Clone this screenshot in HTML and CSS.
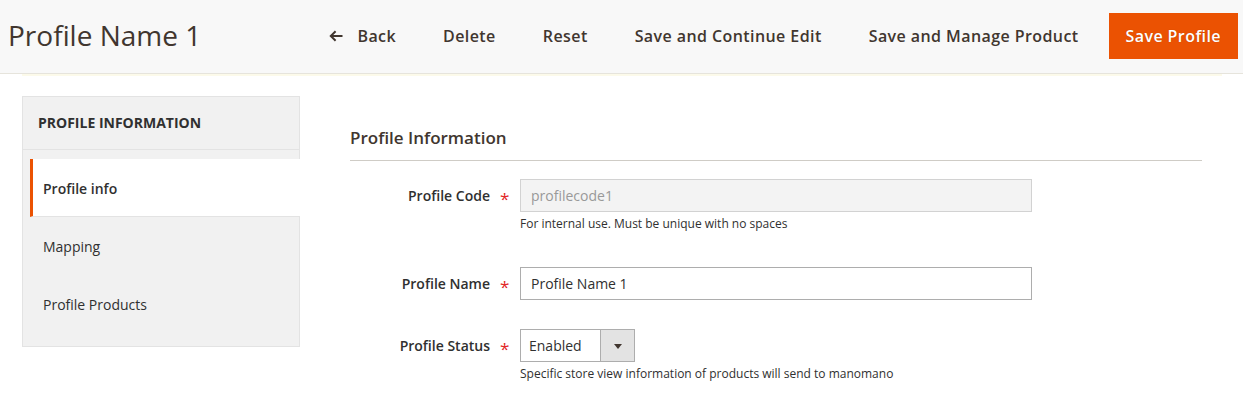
FILE: index.html
```html
<!DOCTYPE html>
<html lang="en">
<head>
<meta charset="utf-8">
<title>Profile Name 1</title>
<link rel="stylesheet" href="styles.css">
</head>
<body>
<header class="page-header">
  <h1 class="page-title">Profile Name 1</h1>
  <div class="page-actions">
    <button class="action back" type="button">
      <svg class="back-icon" width="14" height="12" viewBox="0 0 14 12" aria-hidden="true">
        <path d="M13.5 6H2.2M6.6 1.3L1.8 6l4.8 4.7" fill="none" stroke="#41362f" stroke-width="2"/>
      </svg>
      <span>Back</span>
    </button>
    <button class="action" type="button">Delete</button>
    <button class="action" type="button">Reset</button>
    <button class="action" type="button">Save and Continue Edit</button>
    <button class="action" type="button">Save and Manage Product</button>
    <button class="action primary" type="button">Save Profile</button>
  </div>
</header>
<div class="messages-band"></div>

<div class="page-columns">
  <aside class="sidebar">
    <div class="nav-title">Profile Information</div>
    <ul class="nav-items">
      <li class="nav-item active">Profile info</li>
      <li class="nav-item">Mapping</li>
      <li class="nav-item">Profile Products</li>
    </ul>
  </aside>

  <main class="main">
    <div class="legend">Profile Information</div>

    <div class="field">
      <label class="field-label">Profile Code<span class="req">*</span></label>
      <div class="field-control">
        <div class="input disabled">profilecode1</div>
        <div class="note">For internal use. Must be unique with no spaces</div>
      </div>
    </div>

    <div class="field">
      <label class="field-label">Profile Name<span class="req">*</span></label>
      <div class="field-control">
        <div class="input">Profile Name 1</div>
      </div>
    </div>

    <div class="field">
      <label class="field-label">Profile Status<span class="req">*</span></label>
      <div class="field-control">
        <div class="select">
          <span class="select-value">Enabled</span>
          <span class="select-arrow"><span class="tri"></span></span>
        </div>
        <div class="note">Specific store view information of products will send to manomano</div>
      </div>
    </div>
  </main>
</div>
</body>
</html>
```

FILE: styles.css
```css
* { box-sizing: border-box; }

html, body {
  margin: 0;
  padding: 0;
  background: #ffffff;
  font-family: "Open Sans", "Liberation Sans", sans-serif;
  color: #303030;
}

.page-header {
  height: 74px;
  background: #f8f8f8;
  border-bottom: 1px solid #e6e4dc;
  display: flex;
  align-items: center;
  justify-content: space-between;
  padding: 0 5px 1px 8px;
}

.page-title {
  margin: 0;
  font-size: 28px;
  font-weight: 400;
  color: #41362f;
  line-height: 36px;
  padding-bottom: 2px;
}

.page-actions {
  display: flex;
  align-items: center;
  gap: 13px;
}

.action {
  height: 46px;
  padding: 0 17px;
  border: 0;
  background: transparent;
  font-family: inherit;
  font-size: 16px;
  font-weight: 600;
  letter-spacing: 0.42px;
  color: #41362f;
  display: flex;
  align-items: center;
  cursor: pointer;
}

.action.back { gap: 14px; }
.back-icon { display: block; }

.action.primary {
  background: #eb5202;
  color: #ffffff;
  text-shadow: 0 0 1px rgba(0,0,0,0.25);
}

.messages-band {
  height: 2px;
  margin: 0 21px 0 22px;
  background: #fcfaea;
}

.page-columns {
  display: flex;
  align-items: flex-start;
  padding: 20px 41px 0 22px;
}

.sidebar {
  width: 278px;
  flex: none;
  background: #f1f1f1;
  border: 1px solid #e3e3e3;
  padding-bottom: 13px;
}

.nav-title {
  height: 53px;
  display: flex;
  align-items: center;
  padding: 0 15px 1px 15px;
  font-size: 14px;
  font-weight: 700;
  text-transform: uppercase;
  color: #303030;
  border-bottom: 1px solid #e3e3e3;
}

.nav-items {
  list-style: none;
  margin: 9px 0 0 0;
  padding: 0;
}

.nav-item {
  height: 58px;
  display: flex;
  align-items: center;
  margin-left: 7px;
  margin-right: -1px;
  padding-left: 10px;
  border-left: 3px solid transparent;
  font-size: 14px;
  color: #303030;
}

.nav-item.active {
  background: #ffffff;
  border-left-color: #eb5202;
  font-weight: 600;
  padding-top: 1px;
  border-bottom: 1px solid #e3e3e3;
}

.main {
  flex: 1;
  margin-left: 50px;
  padding-top: 30px;
}

.legend {
  font-size: 17px;
  font-weight: 600;
  color: #41362f;
  line-height: 24px;
  padding-bottom: 10px;
  border-bottom: 1px solid #cfccc6;
  margin-bottom: 18px;
}

.field {
  display: flex;
  align-items: flex-start;
  margin-bottom: 29px;
}

.field:nth-of-type(2) { margin-bottom: 34px; }

.field-label {
  width: 170px;
  flex: none;
  height: 33px;
  display: flex;
  align-items: center;
  justify-content: flex-end;
  padding-right: 12px;
  font-size: 14px;
  font-weight: 600;
  color: #303030;
}

.req {
  color: #e22626;
  font-size: 17px;
  font-weight: 400;
  margin-left: 10px;
  width: 8px;
  line-height: 1;
  padding-top: 6px;
}

.field-control { flex: none; }

.input {
  width: 512px;
  height: 33px;
  border: 1px solid #adadad;
  background: #ffffff;
  padding: 0 10px;
  display: flex;
  align-items: center;
  font-size: 14px;
  color: #303030;
}

.input.disabled {
  background: #f3f3f3;
  border-color: #d2d2d2;
  color: #999999;
}

.note {
  margin-top: 3px;
  font-size: 12px;
  line-height: 18px;
  color: #303030;
}

.select {
  width: 115px;
  height: 33px;
  border: 1px solid #adadad;
  background: #ffffff;
  display: flex;
  font-size: 14px;
  color: #303030;
}

.select-value {
  flex: 1;
  display: flex;
  align-items: center;
  padding-left: 8px;
}

.select-arrow {
  width: 34px;
  flex: none;
  background: #e3e3e3;
  border-left: 1px solid #adadad;
  display: flex;
  align-items: center;
  justify-content: center;
}

.tri {
  width: 0;
  height: 0;
  border-left: 4px solid transparent;
  border-right: 4px solid transparent;
  border-top: 5px solid #41362f;
  margin-top: 1px;
}
```
